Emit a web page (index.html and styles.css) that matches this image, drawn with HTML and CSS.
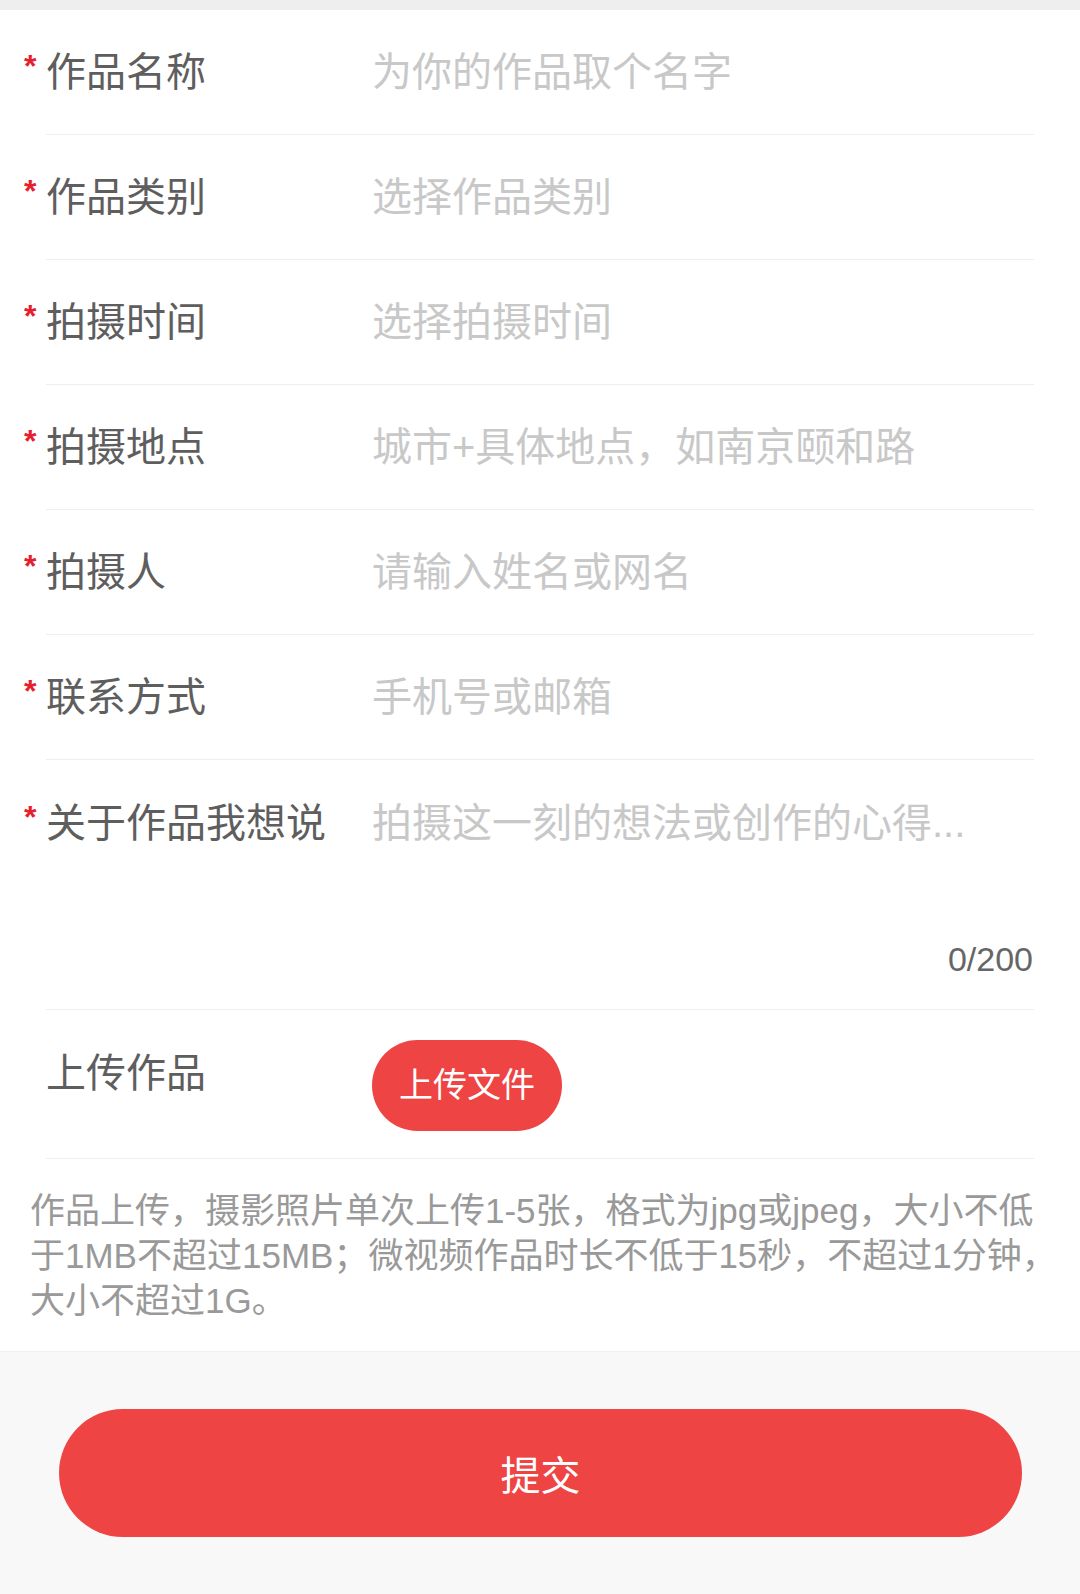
FILE: index.html
```html
<!DOCTYPE html>
<html>
<head>
  <meta charset="utf-8">
  <title>作品上传</title>
  <link rel="stylesheet" href="styles.css">
</head>
<body>
  <div class="topbar"></div>

  <form class="form">
    <div class="field">
      <label class="label"><span class="req">*</span>作品名称</label>
      <input class="input" type="text" placeholder="为你的作品取个名字">
    </div>
    <div class="field">
      <label class="label"><span class="req">*</span>作品类别</label>
      <input class="input" type="text" placeholder="选择作品类别" readonly>
    </div>
    <div class="field">
      <label class="label"><span class="req">*</span>拍摄时间</label>
      <input class="input" type="text" placeholder="选择拍摄时间" readonly>
    </div>
    <div class="field">
      <label class="label"><span class="req">*</span>拍摄地点</label>
      <input class="input" type="text" placeholder="城市+具体地点，如南京颐和路">
    </div>
    <div class="field">
      <label class="label"><span class="req">*</span>拍摄人</label>
      <input class="input" type="text" placeholder="请输入姓名或网名">
    </div>
    <div class="field">
      <label class="label"><span class="req">*</span>联系方式</label>
      <input class="input" type="text" placeholder="手机号或邮箱">
    </div>

    <!-- 作品描述 -->
    <div class="field field-area">
      <label class="label"><span class="req">*</span>关于作品我想说</label>
      <div class="area-box">
        <textarea class="textarea" maxlength="200" placeholder="拍摄这一刻的想法或创作的心得..."></textarea>
        <div class="counter">0/200</div>
      </div>
    </div>

    <div class="field field-upload">
      <label class="label">上传作品</label>
      <button type="button" class="upload-btn">上传文件</button>
    </div>

    <p class="note">作品上传，摄影照片单次上传1-5张，格式为jpg或jpeg，大小不低于1MB不超过15MB；微视频作品时长不低于15秒，不超过1分钟，大小不超过1G。</p>
  </form>

  <div class="footer">
    <button type="button" class="submit-btn">提交</button>
  </div>
</body>
</html>
```

FILE: styles.css
```css
body {
  margin: 0;
  background: #f8f8f8;
  font-family: "Liberation Sans", "Noto Sans CJK SC", sans-serif;
  color: #555;
}
.topbar {
  height: 10px;
  background: #eeeeee;
}
.form {
  margin: 0;
  background: #fff;
}
.field {
  display: flex;
  align-items: center;
  height: 124px;
  margin: 0 46px;
  border-bottom: 1px solid #eeeeee;
}
.label {
  flex: none;
  width: 326px;
  font-size: 40px;
  line-height: 48px;
  color: #5e5e5e;
}
.req {
  display: inline-block;
  width: 22px;
  margin-left: -22px;
  font-size: 32px;
  font-weight: bold;
  line-height: 1;
  color: #e61e2d;
  vertical-align: 9px;
}
.input,
.textarea {
  flex: 1;
  min-width: 0;
  padding: 0;
  border: 0;
  outline: none;
  background: transparent;
  font-family: inherit;
  font-size: 40px;
  line-height: 48px;
  color: #333;
}
.input::placeholder,
.textarea::placeholder {
  color: #c8c8c8;
}

/* 多行输入 */
.field-area {
  height: 250px;
  align-items: flex-start;
  padding: 39px 0 30px;
  box-sizing: border-box;
}
.area-box {
  flex: 1;
  display: flex;
  flex-direction: column;
  height: 100%;
}
.textarea {
  flex: 1;
  resize: none;
  overflow: hidden;
}
.counter {
  text-align: right;
  font-size: 34px;
  line-height: 40px;
  color: #666;
  margin-right: 1px;
}

.field-upload {
  height: 149px;
  align-items: flex-start;
  padding-top: 30px;
  box-sizing: border-box;
}
.field-upload .label {
  margin-top: 9px;
}
.upload-btn {
  height: 91px;
  padding: 0 27px;
  border: 0;
  border-radius: 46px;
  background: #ef4444;
  color: #fff;
  font-family: inherit;
  font-size: 34px;
  line-height: 91px;
}

.note {
  margin: 0;
  padding: 29px 20px 28px 30px;
  font-size: 35px;
  line-height: 45px;
  color: #999;
  border-bottom: 1px solid #f0f0f0;
}

.footer {
  padding: 57px 58px 59px 59px;
}
.submit-btn {
  display: block;
  width: 100%;
  height: 128px;
  border: 0;
  border-radius: 64px;
  background: #ef4444;
  color: #fff;
  font-family: inherit;
  font-size: 40px;
}
```
